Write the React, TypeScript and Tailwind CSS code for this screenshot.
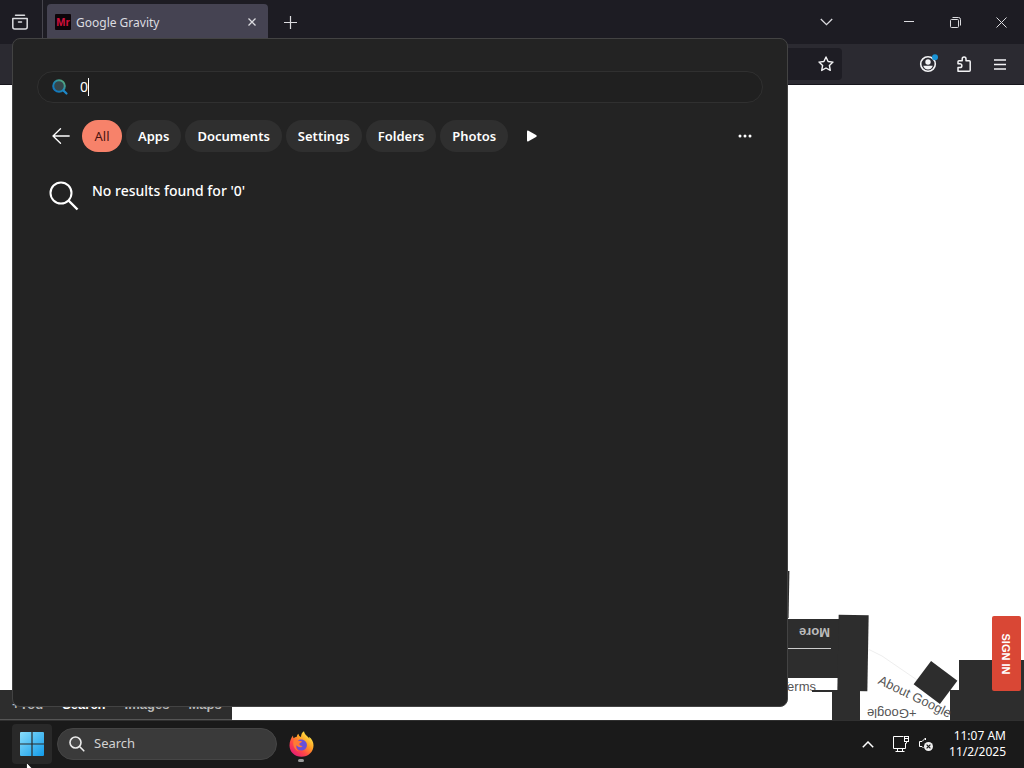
import type { ReactNode } from 'react';

const filters = ['Apps', 'Documents', 'Settings', 'Folders', 'Photos'];

const navItems = ['+You', 'Search', 'Images', 'Maps'];

interface IconButtonProps {
  label: string;
  className?: string;
  children: ReactNode;
}

function IconButton({ label, className = '', children }: IconButtonProps) {
  return (
    <button type="button" aria-label={label} className={`flex items-center justify-center ${className}`}>
      {children}
    </button>
  );
}

function TabBar() {
  return (
    <div className="flex h-11 shrink-0 items-stretch bg-[#1d1c23] text-[#dcdce0]">
      <IconButton label="Recent browsing" className="mr-0.5 w-10">
        <svg width="18" height="18" viewBox="0 0 18 18" fill="none" stroke="currentColor" strokeWidth="1.5" strokeLinecap="round">
          <path d="M4.5 2.200h9" />
          <path d="M1.800 5.500h14.400v8.500a2 2 0 0 1-2 2H3.800a2 2 0 0 1-2-2z" strokeLinejoin="round" />
          <path d="M7.500 9h3" />
        </svg>
      </IconButton>
      <div className="mr-1 w-px bg-[#46454d]" />
      <div className="mt-1 flex w-[221px] items-center rounded-t bg-[#454352] pr-2 pb-1 pl-2">
        <svg width="16" height="16" viewBox="0 0 16 16" className="shrink-0">
          <rect width="16" height="16" rx="1" fill="#0d0509" />
          <text x="8" y="12" textAnchor="middle" fontFamily="Liberation Sans, sans-serif" fontSize="11" fontWeight="bold" fill="#d0103c">Mr</text>
        </svg>
        <span className="ml-[5px] flex-1 pt-0.5 text-xs">Google Gravity</span>
        <IconButton label="Close tab" className="size-4">
          <svg width="8" height="8" viewBox="0 0 8 8" stroke="currentColor" strokeWidth="1.3">
            <path d="M.5.5l7 7M7.5.5l-7 7" />
          </svg>
        </IconButton>
      </div>
      <IconButton label="New tab" className="w-11">
        <svg width="13" height="13" viewBox="0 0 13 13" stroke="currentColor" strokeWidth="1.2">
          <path d="M6.500 0v13M0 6.500h13" />
        </svg>
      </IconButton>
      <div className="flex-1" />
      <IconButton label="List all tabs" className="mr-[37px] w-[46px]">
        <svg width="13" height="8" viewBox="0 0 13 8" fill="none" stroke="currentColor" strokeWidth="1.3">
          <path d="M.8 1l5.7 5.7L12.200 1" />
        </svg>
      </IconButton>
      <IconButton label="Minimize" className="w-[46px]">
        <svg width="10" height="10" viewBox="0 0 10 10" stroke="currentColor">
          <path d="M0 4.500h10" />
        </svg>
      </IconButton>
      <IconButton label="Restore" className="w-[46px]">
        <svg width="11" height="11" viewBox="0 0 11 11" fill="none" stroke="currentColor">
          <rect x=".5" y="2.500" width="8" height="8" rx="1" />
          <path d="M2.500.5H8.500a2 2 0 0 1 2 2v6" />
        </svg>
      </IconButton>
      <IconButton label="Close" className="w-[46px]">
        <svg width="11" height="11" viewBox="0 0 11 11" stroke="currentColor">
          <path d="M.5.5l10 10M10.500.5l-10 10" />
        </svg>
      </IconButton>
    </div>
  );
}

function Toolbar() {
  return (
    <div className="flex h-[41px] shrink-0 items-center justify-end border-b border-[#16151c] bg-[#2b2a31] text-[#f4f4f6]">
      <div className="mr-[68px] flex h-8 w-[740px] items-center justify-end rounded bg-[#1e1d24]">
        <IconButton label="Bookmark this page" className="size-8">
          <svg width="16" height="16" viewBox="0 0 16 16" fill="none" stroke="currentColor" strokeWidth="1.4" strokeLinejoin="round">
            <path d="M8 1l2.100 4.500 4.900.6-3.600 3.400.9 4.900L8 12l-4.300 2.400.9-4.900L1 6.100l4.900-.6z" />
          </svg>
        </IconButton>
      </div>
      <IconButton label="Account" className="size-9">
        <svg width="20" height="20" viewBox="0 0 20 20" fill="none">
          <circle cx="10" cy="10" r="7.300" stroke="currentColor" strokeWidth="1.600" />
          <circle cx="10" cy="8" r="2.700" fill="currentColor" />
          <path d="M5.200 11.800h9.600a5 5 0 0 1-9.600 0z" fill="currentColor" />
          <circle cx="17" cy="3.200" r="3" fill="#1a94d6" />
        </svg>
      </IconButton>
      <IconButton label="Extensions" className="size-9">
        <svg width="16" height="16" viewBox="0 0 16 16" fill="none" stroke="currentColor" strokeWidth="1.500" strokeLinejoin="round">
          <path d="M2 15.200h11.200a1 1 0 0 0 1-1V5.800a1 1 0 0 0-1-1H10V3a1.900 1.900 0 0 0-3.800 0v1.800H3a1 1 0 0 0-1 1v2h2a1.800 1.800 0 0 1 0 3.700H2z" />
        </svg>
      </IconButton>
      <IconButton label="Open menu" className="mr-1.5 size-9">
        <svg width="12" height="11" viewBox="0 0 12 11" stroke="currentColor" strokeWidth="1.300">
          <path d="M0 1h12M0 5.500h12M0 10h12" />
        </svg>
      </IconButton>
    </div>
  );
}

// The page's elements have fallen to the floor, each one lies where it landed
function GravityPage() {
  return (
    <main className="relative flex-1 overflow-hidden bg-white font-['Liberation_Sans',Arial,sans-serif] text-[13px] leading-4 text-[#555]">
      <nav className="absolute bottom-0 left-0 flex h-[30px] w-[232px] items-center gap-[19px] border-b border-[#555] bg-[#2d2d2d] pl-3 font-bold text-[#b8b8b8]">
        {navItems.map((item) => (
          <a key={item} href="#" className={item === 'Search' ? 'text-white' : ''}>
            {item}
          </a>
        ))}
      </nav>

      <div className="absolute right-[235px] bottom-[102px] h-[47px] w-1.5 rotate-1 bg-[#2d2d2d]" />
      <div className="absolute right-[184px] bottom-[42px] h-[59px] w-20 bg-[#2d2d2d]" />
      <div className="absolute right-[193px] bottom-[71px] h-px w-20 bg-[#ccc]" />
      <a href="#" className="absolute right-[194px] bottom-20 rotate-180 font-bold text-[#bbb]">More</a>
      <div className="absolute right-[156px] bottom-[29px] h-[76px] w-[30px] rotate-1 bg-[#2d2d2d]" />
      <a href="#" className="absolute right-[208px] bottom-[25px]">Terms</a>
      <div className="absolute right-[186px] bottom-[28px] h-0.5 w-[26px] bg-[#2d2d2d]" />
      <div className="absolute right-[164px] bottom-0 h-[30px] w-7 bg-[#2d2d2d]" />

      <svg className="absolute right-[96px] bottom-[36px]" width="60" height="36" viewBox="0 0 60 36">
        <path d="M0 1l14 7 38 26" fill="none" stroke="#eee" />
      </svg>
      <div className="absolute right-[72px] bottom-[23px] h-[29px] w-[33px] rotate-[37deg] bg-[#2d2d2d]" />
      <div className="absolute right-0 bottom-0 h-[60px] w-[65px] bg-[#2d2d2d]" />
      <div className="absolute right-0 bottom-0 h-[30px] w-[74px] bg-[#2d2d2d]" />
      <a href="#" className="absolute right-[69px] bottom-[15px] rotate-[26deg]">About Google</a>
      <a href="#" className="absolute right-[107px] -bottom-px rotate-180">+Google</a>
      <button
        type="button"
        className="absolute right-[3px] bottom-[29px] flex h-[75px] w-[29px] items-center justify-center rounded-xs bg-[#d94735] text-[11px] font-bold text-white"
      >
        <span className="rotate-90 whitespace-nowrap">SIGN IN</span>
      </button>
    </main>
  );
}

function SearchFlyout() {
  return (
    <section className="absolute top-[38px] bottom-[61px] left-3 flex w-[776px] max-w-full flex-col rounded-lg border border-[#434343] bg-[#232323] px-6 pt-8 text-white">
      <label className="flex h-8 items-center rounded-full border border-[#303030] bg-[#202020] pl-[13px]">
        <svg width="18" height="18" viewBox="0 0 18 18" fill="none" aria-label="Search">
          <defs>
            <linearGradient id="lens" x1="0" y1="1" x2="1" y2="0">
              <stop offset="0" stopColor="#0b70c4" />
              <stop offset="0.500" stopColor="#2189b0" />
              <stop offset="1" stopColor="#62b070" />
            </linearGradient>
          </defs>
          <circle cx="8" cy="8" r="5.800" fill="#35464b" stroke="url(#lens)" strokeWidth="2" />
          <path d="M12.500 12.500l3 3" stroke="#1e88c9" strokeWidth="2.200" strokeLinecap="round" />
        </svg>
        <input type="text" defaultValue="0" className="ml-[11px] w-2 bg-transparent text-sm outline-none" />
        <span className="h-[18px] w-px bg-white" />
      </label>

      <div className="mt-[17px] flex items-center gap-1 text-[13px] font-semibold">
        <IconButton label="Back" className="h-8 w-[41px] pl-1.5">
          <svg width="18" height="16" viewBox="0 0 18 16" fill="none" stroke="currentColor" strokeWidth="1.300" strokeLinecap="round" strokeLinejoin="round">
            <path d="M8.500.8L1 8l7.500 7.200M1 8h16.200" />
          </svg>
        </IconButton>
        <button type="button" className="h-8 w-10 rounded-full bg-[#f7826a] pt-px font-normal text-[#4a1410]">All</button>
        {filters.map((filter) => (
          <button key={filter} type="button" className="h-8 rounded-full bg-[#2f2f2f] px-3 pt-px">
            {filter}
          </button>
        ))}
        <IconButton label="More filters" className="ml-1 size-8">
          <svg width="10" height="12" viewBox="0 0 10 12" fill="currentColor">
            <path d="M0 1.500Q0 0 1.500.7L9 5Q10.500 6 9 7L1.500 11.300Q0 12 0 10.500z" />
          </svg>
        </IconButton>
        <div className="flex-1" />
        <IconButton label="Options" className="mr-0.5 size-8">
          <svg width="14" height="4" viewBox="0 0 14 4" fill="currentColor">
            <circle cx="2" cy="2" r="1.500" />
            <circle cx="7" cy="2" r="1.500" />
            <circle cx="12" cy="2" r="1.500" />
          </svg>
        </IconButton>
      </div>

      <div className="mt-[29px] flex gap-[13px] pl-3">
        <svg width="30" height="30" viewBox="0 0 30 30" fill="none" stroke="currentColor" strokeWidth="2">
          <circle cx="12" cy="12" r="10.500" />
          <path d="M19.500 19.500l9 9" strokeWidth="2.400" />
        </svg>
        <p className="text-sm leading-5 font-medium">No results found for '0'</p>
      </div>
    </section>
  );
}

function FirefoxIcon() {
  return (
    <svg width="25" height="26" viewBox="0 0 25 26">
      <defs>
        <linearGradient id="fox" x1="0.850" y1="0.100" x2="0.200" y2="0.900">
          <stop offset="0" stopColor="#fff04a" />
          <stop offset="0.400" stopColor="#ff9a24" />
          <stop offset="0.700" stopColor="#ff4a45" />
          <stop offset="1" stopColor="#e8206f" />
        </linearGradient>
      </defs>
      <path
        d="M4 4.500c0 1 .2 2 .6 2.700C5.500 6.500 6.500 6 7.800 5.800 8 4.500 8.500 3.500 9.500 2.800c0 1.500.9 2.700 2.500 3.200C12 3.500 13 1.500 15 .3c.3 2.700 2.300 4 4 5.700.5.5.9 1 1.200 1.700.1-.8 0-1.300-.2-1.900 3 2.200 4.500 5.300 4.500 8.700C24.500 21 19.100 25.800 12.500 25.800S.5 21 .5 14.500C.5 10.500 2 7 4 4.500z"
        fill="url(#fox)"
      />
      <path d="M8 10.500c1.700-2.300 6-2.600 8.300-.3 2.500 2.500 2 6.500-.6 8.300-2.500 1.700-6.500 1-7.900-1.600-1.100-2-.8-4.700.2-6.400z" fill="#6a4fd8" />
      <path d="M4.800 9c1.700-.7 3.800-.3 5 .7l3.200.5c-.3 1.600-2.500 1.600-2.700 2.600-.2 1.300 1.500 2.500 3.300 2.200-1.200 1.900-4.500 1.600-6-.7-1 2 .1 5 3 6.200C5.500 19.500 3 14 4.800 9z" fill="#ff7a35" />
    </svg>
  );
}

function Taskbar() {
  return (
    <footer className="relative flex h-12 shrink-0 items-center border-t border-[#303030] bg-[#1a1a1a] px-3 pb-px text-white">
      <IconButton label="Start" className="size-10 rounded bg-[#292929]">
        <svg width="24" height="24" viewBox="0 0 24 24">
          <defs>
            <linearGradient id="win" x1="0" y1="0" x2="1" y2="1">
              <stop offset="0" stopColor="#88ddfa" />
              <stop offset="1" stopColor="#129bea" />
            </linearGradient>
          </defs>
          <path d="M0 1q0-1 1-1h10.400v11.400H0zM12.600 0H23q1 0 1 1v10.400H12.600zM0 12.600h11.400V24H1q-1 0-1-1zM12.600 12.600H24V23q0 1-1 1H12.600z" fill="url(#win)" />
        </svg>
      </IconButton>
      <label className="ml-[5px] flex h-8 w-[220px] items-center rounded-full border border-[#454545] bg-[#3a3a3a] pl-[11px]">
        <svg width="16" height="16" viewBox="0 0 16 16" fill="none" stroke="#ececec" strokeWidth="1.600" strokeLinecap="round" aria-label="Search">
          <circle cx="6.500" cy="6.500" r="5.500" fill="#4b4b4b" />
          <path d="M10.800 10.800l4 4" />
        </svg>
        <input type="text" placeholder="Search" className="ml-[9px] min-w-0 flex-1 bg-transparent text-[13px] outline-none placeholder:text-[#d2d2d2]" />
      </label>
      <button type="button" aria-label="Firefox" className="relative ml-1 flex size-10 items-center justify-center">
        <FirefoxIcon />
        <span className="absolute bottom-0.5 h-[3px] w-1.5 rounded-full bg-[#9a9a9a]" />
      </button>
      <div className="flex-1" />
      <IconButton label="Show hidden icons" className="mr-3 size-6">
        <svg width="12" height="7" viewBox="0 0 12 7" fill="none" stroke="currentColor" strokeWidth="1.500">
          <path d="M.8 6.200L6 1l5.200 5.200" />
        </svg>
      </IconButton>
      <button type="button" aria-label="Network and volume" className="mr-[15px] flex items-center gap-2">
        <svg width="18" height="18" viewBox="0 0 18 18" fill="none" stroke="currentColor">
          <path d="M11.500 1.500h-10v12h12V8" />
          <path d="M5.500 13.500v3M10.500 13.500v3M3.500 16.500h9" />
          <rect x="12.500" y="1.500" width="4" height="5" />
          <path d="M14.500 6.500v2M12.500 3.500h4" />
        </svg>
        <svg width="16" height="16" viewBox="0 0 16 16" fill="none">
          <path d="M7.500 4V2L4 5.500H1.500v5H4l1.500 1.500" stroke="currentColor" />
          <circle cx="10.500" cy="10.500" r="4.500" fill="#efefef" />
          <path d="M8.600 8.600l3.800 3.800M12.400 8.600l-3.800 3.800" stroke="#1a1a1a" strokeWidth="1.200" />
        </svg>
      </button>
      <div className="mr-1.5 text-right text-xs leading-4">
        <p>11:07 AM</p>
        <p>11/2/2025</p>
      </div>
      <svg className="absolute -bottom-3.5 left-[26px]" width="13" height="20" viewBox="0 0 13 20">
        <path d="M.5.5v16l3.700-3.500 2.400 5.700 2.500-1-2.400-5.600h5z" fill="#fff" stroke="#111" strokeWidth=".8" />
      </svg>
    </footer>
  );
}

export default function App() {
  return (
    <div className="relative flex h-screen flex-col overflow-hidden font-['Noto_Sans',sans-serif]">
      <TabBar />
      <Toolbar />
      <GravityPage />
      <Taskbar />
      <SearchFlyout />
    </div>
  );
}
